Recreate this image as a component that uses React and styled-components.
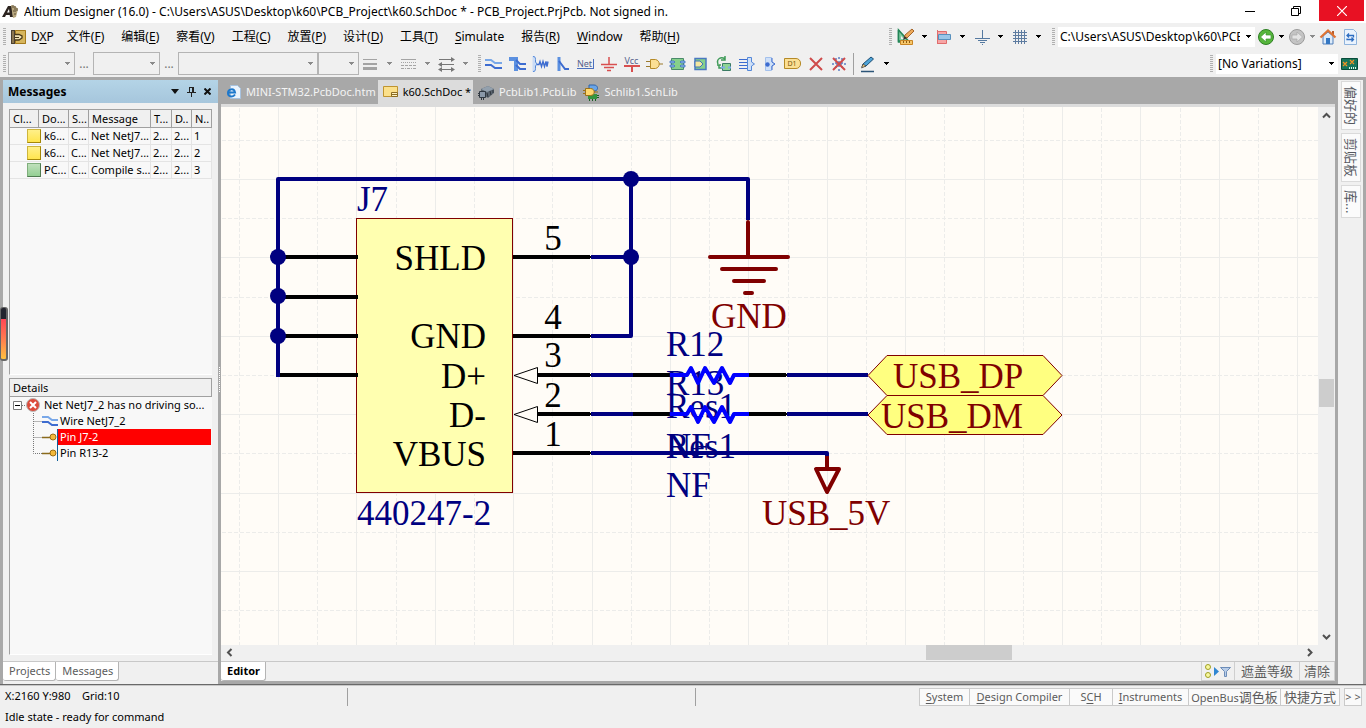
import React from "react";
import styled, { createGlobalStyle, css } from "styled-components";

const UI = `"Noto Sans", "Noto Sans CJK SC", sans-serif`;

const GlobalStyle = createGlobalStyle`
  * { box-sizing: border-box; }
  body { margin: 0; background: #f0f0f0; color: #000; font: 12px/16px ${UI}; }
  button, select, input { font: inherit; color: inherit; }
  button { padding: 0; border: 0; background: none; cursor: default; }
`;

const Shell = styled.div`
  display: flex;
  flex-direction: column;
  min-height: 100vh;
  overflow: hidden;
  position: relative;
`;

/* ---------- title bar ---------- */

const TitleBar = styled.header`
  display: flex;
  align-items: center;
  gap: 1px;
  height: 23px;
  padding: 0 2px;
  background: #fff;
`;

const AppTitle = styled.h1`
  flex: 1;
  min-width: 0;
  margin: 0 0 0 5px;
  overflow: hidden;
  font-size: 12px;
  font-weight: 400;
  line-height: 23px;
  white-space: nowrap;
`;

const WindowButton = styled.button`
  display: flex;
  align-items: center;
  justify-content: center;
  align-self: flex-start;
  width: 45px;
  height: 21px;
  color: ${(p) => (p.$close ? "#fff" : "#000")};
  background: ${(p) => (p.$close ? "#e81123" : "transparent")};
`;

/* ---------- menu and tool bars ---------- */

const BarRow = styled.div`
  display: flex;
  align-items: center;
  justify-content: space-between;
  height: 27px;
  padding: 0 5px 0 3px;
`;

const BarGroup = styled.div`
  display: flex;
  align-items: center;
  height: 27px;
`;

const Menu = styled.nav`
  display: flex;
  align-items: center;
  gap: 17px;
  margin-left: 5px;
`;

const MenuItem = styled.button`
  line-height: 20px;
  white-space: nowrap;
  &:first-child { margin-right: -4px; }
  u { text-underline-offset: 2px; }
`;

const Grip = styled.span`
  flex: none;
  width: 3px;
  height: 17px;
  margin-left: ${(p) => p.$before || 0}px;
  margin-right: ${(p) => p.$after || 2}px;
  background: repeating-linear-gradient(#b0b0b0 0 1px, transparent 1px 2px);
`;

const ToolButton = styled.button`
  display: flex;
  align-items: center;
  justify-content: center;
  flex: none;
  width: ${(p) => p.$w || 23}px;
  height: 22px;
`;

const Divider = styled.span`
  width: 1px;
  height: 22px;
  margin: 0 4px 0 3px;
  background: #a0a0a0;
`;

const ComboFrame = styled.span`
  display: flex;
  align-items: center;
  gap: 4px;
  flex: none;
  width: ${(p) => p.$w}px;
  height: ${(p) => (p.$filled ? 20 : 23)}px;
  padding-right: 4px;
  background: ${(p) => (p.$filled ? "#fff" : "transparent")};
  border: ${(p) => (p.$filled ? "0" : "1px solid #b4b4b4")};
  select {
    flex: 1;
    min-width: 0;
    height: 100%;
    padding: 0 2px;
    border: 0;
    background: transparent;
    appearance: none;
    text-overflow: clip;
    opacity: 1;
  }
`;

const Ellipsis = styled.span`
  width: 18px;
  color: #777;
  text-align: center;
  line-height: 20px;
`;

/* ---------- workspace ---------- */

const Workspace = styled.main`
  display: flex;
  flex: 1;
  gap: 3px;
  padding: 3px 3px 0;
  background: #a8a8a8;
  border-bottom: 1px solid #696969;
`;

const SidePanel = styled.aside`
  display: flex;
  flex-direction: column;
  flex: none;
  width: 215px;
  background: #f0f0f0;
`;

const PanelHeader = styled.div`
  display: flex;
  align-items: center;
  height: 23px;
  padding: 0 3px 0 5px;
  background: linear-gradient(#b4d4e7, #a6c6dc);
  h2 { flex: 1; margin: 0; font-size: 12px; line-height: 23px; }
`;

const PanelBody = styled.div`
  display: flex;
  flex: 1;
  flex-direction: column;
  gap: 3px;
  padding: 6px;
`;

const ListBox = styled.section`
  flex: ${(p) => p.$grow} 1 0;
  min-height: 120px;
  overflow: hidden;
  background: #f8f8f8;
  border-top: 1px solid #a0a0a0;
  border-left: 1px solid #a0a0a0;
  border-bottom: 1px solid #fff;
`;

const MessageTable = styled.table`
  width: 100%;
  table-layout: fixed;
  border-collapse: separate;
  border-spacing: 0;
  font-size: 11px;
  line-height: 16px;
  th, td {
    height: 17px;
    padding: 0 0 0 2px;
    overflow: hidden;
    font-weight: 400;
    text-align: left;
    white-space: nowrap;
    border-right: 1px solid #e4e4e4;
    border-bottom: 1px solid #e4e4e4;
  }
  th {
    height: 18px;
    padding-left: 3px;
    background: #f0f0f0;
    border-color: #a0a0a0;
  }
`;

const FileCell = styled.div`
  display: flex;
  align-items: center;
  gap: 3px;
  padding-left: 15px;
`;

const Swatch = styled.span`
  width: 14px;
  height: 14px;
  border: 1px solid;
  ${(p) =>
    p.$ok
      ? css`background: linear-gradient(#bfe0bb, #94cf94); border-color: #7fae7c #4f7a50 #4f7a50 #7fae7c;`
      : css`background: linear-gradient(#fff08a, #ffe54e); border-color: #cdb53c #a48708 #a48708 #cdb53c;`}
`;

const DetailsHeader = styled.h3`
  height: 18px;
  margin: 0;
  padding-left: 3px;
  font-size: 11px;
  font-weight: 400;
  line-height: 17px;
  background: #f0f0f0;
  border-right: 1px solid #a0a0a0;
  border-bottom: 1px solid #a0a0a0;
`;

const Tree = styled.ul`
  margin: 0;
  padding: 0;
  list-style: none;
  font-size: 11px;
  line-height: 16px;
  white-space: nowrap;
`;

const TreeItem = styled.li`
  display: flex;
  align-items: center;
  height: 16px;
  padding-left: ${(p) => (p.$root ? 3 : 23)}px;
  padding-right: 1px;
  svg { flex: none; }
  span {
    flex: 1;
    padding-left: ${(p) => (p.$root ? 4 : 2)}px;
    color: ${(p) => (p.$selected ? "#fff" : "#000")};
    background: ${(p) => (p.$selected ? "#f00" : "transparent")};
    border-left: ${(p) => (p.$pin ? "1px solid #10609a" : "0")};
  }
`;

const TabRow = styled.div`
  display: flex;
  height: ${(p) => p.$h || 23}px;
  border-top: 1px solid #c8c8c8;
  background: #f0f0f0;
`;

const BottomTab = styled.button`
  height: 19px;
  padding: 0 5px 0 6px;
  font-size: 11px;
  line-height: 18px;
  color: ${(p) => (p.$active ? "#000" : "#5c5c5c")};
  font-weight: ${(p) => (p.$active ? 700 : 400)};
  background: #fff;
  border-right: 1px solid #b4b4b4;
  border-bottom: 1px solid #b4b4b4;
  border-radius: 0 0 3px 3px;
`;

const DocArea = styled.section`
  display: flex;
  flex: 1;
  flex-direction: column;
  min-width: 0;
  padding-bottom: 3px;
`;

const DocTabs = styled.div`
  display: flex;
  height: 27px;
  border-bottom: 3px solid #dcdcdc;
`;

const DocTab = styled.button`
  display: flex;
  align-items: center;
  gap: 5px;
  height: 24px;
  padding: 0 2px 0 5px;
  font-size: 11px;
  white-space: nowrap;
  color: ${(p) => (p.$active ? "#000" : "#f4f4f4")};
  background: ${(p) => (p.$active ? "#dcdcdc" : "transparent")};
`;

const Viewport = styled.div`
  display: grid;
  flex: 1;
  grid-template-columns: 1fr 17px;
  grid-template-rows: 1fr 16px;
  background: #f0f0f0;
`;

const SheetFrame = styled.div`
  display: flex;
  min-width: 0;
  min-height: 430px;
  overflow: hidden;
  background: #fffcf7;
  contain: size;
`;

const SheetSvg = styled.svg`
  width: 100%;
  height: 100%;
  font-family: "Liberation Serif", serif;
  font-size: 35px;
`;

const ScrollTrack = styled.div`
  display: flex;
  flex-direction: ${(p) => (p.$vertical ? "column" : "row")};
  align-items: ${(p) => (p.$vertical ? "center" : "flex-start")};
`;

const ScrollArrow = styled.button`
  display: flex;
  align-items: center;
  justify-content: center;
  flex: none;
  width: 17px;
  height: ${(p) => p.$h || 17}px;
`;

const Space = styled.span`
  flex: ${(p) => p.$grow} 1 0;
`;

const Thumb = styled.span`
  flex: none;
  width: ${(p) => p.$w}px;
  height: ${(p) => p.$h}px;
  background: #cdcdcd;
`;

const EditorActions = styled.div`
  display: flex;
  margin-left: auto;
`;

const ActionButton = styled.button`
  display: flex;
  align-items: center;
  height: 19px;
  padding: 0 ${(p) => p.$pad || 4}px;
  font-size: 13px;
  line-height: 16px;
  color: #5c5c5c;
  border: 1px solid #cfcfcf;
  border-top: 0;
  & + & { border-left: 0; }
`;

const Rail = styled.nav`
  display: flex;
  flex: none;
  flex-direction: column;
  align-items: center;
  gap: 3px;
  width: 25px;
  padding-top: 1px;
  background: #f0f0f0;
`;

const RailTab = styled.button`
  width: 20px;
  padding: 4px 0;
  color: #55585f;
  font-size: 13px;
  line-height: 18px;
  background: #fbfbfb;
  border: 1px solid #dadada;
  writing-mode: vertical-rl;
  text-orientation: sideways;
`;

/* ---------- status bar ---------- */

const StatusBar = styled.footer`
  display: grid;
  grid-template-columns: 348px 348px 1fr;
  height: 43px;
  padding-top: 2px;
  font-size: 11px;
  border-top: 1px solid #c8c8c8;
`;

const StatusText = styled.div`
  height: 18px;
  padding-left: 5px;
  line-height: 16px;
  white-space: pre;
  border-right: ${(p) => (p.$rule ? "1px solid #a0a0a0" : "0")};
`;

const StatusLine = styled.div`
  grid-column: 1 / -1;
  padding-left: 5px;
  line-height: 20px;
`;

const StatusTabs = styled.div`
  display: flex;
  justify-content: flex-end;
  height: 18px;
  padding-right: 4px;
`;

const StatusTab = styled.button`
  flex: none;
  width: ${(p) => p.$w}px;
  height: 18px;
  margin-left: ${(p) => (p.$apart ? 4 : -1)}px;
  overflow: hidden;
  color: #5c5c5c;
  font-size: 11px;
  line-height: 16px;
  white-space: nowrap;
  background: #fafafa;
  border: 1px solid #cacaca;
  u { text-underline-offset: 2px; }
  b { font-size: 13px; font-weight: 400; }
`;

const Gauge = styled.div`
  position: absolute;
  left: 0;
  top: 307px;
  width: 8px;
  height: 54px;
  border: 1px solid #666;
  border-width: 1px 2px 2px 1px;
  border-radius: 3px;
  background: linear-gradient(#23242e 0 11px, #ff4655 11px, #ff7b50 60%, #ffc140);
`;

const SplitDots = styled.span`
  position: absolute;
  left: 219px;
  top: 367px;
  width: 1px;
  height: 25px;
  background: repeating-linear-gradient(#fff 0 1px, transparent 1px 2px);
`;

/* ---------- icons ---------- */

const Icon = ({ w = 18, h = 18, children, ...rest }) => (
  <svg width={w} height={h} viewBox={`0 0 ${w} ${h}`} fill="none" aria-hidden="true" {...rest}>
    {children}
  </svg>
);

const Down = ({ color = "#000" }) => (
  <Icon w={5} h={3} shapeRendering="crispEdges"><path d="M0 0h5v1H4v1H3v1H2V2H1V1H0z" fill={color} /></Icon>
);

const AppLogo = () => (
  <Icon w={16} h={18}>
    <path d="M0 14 6 3h4l1 11H8l-.3-2H4l-1 2zM5 9.500h2.500L7 6z" fill="#2c241f" />
    <path d="m9 2 4 1 3 3-2 8-3 1z" fill="#b8a77e" />
    <path d="M11 2v3m2-2v4m-2 1h3m-2 3h2m1-6v3" stroke="#5e5039" />
  </Icon>
);
const DxpIcon = () => (
  <Icon w={15} h={16}>
    <path d="M0 1h4v14H0z" fill="#4b4030" /><path d="M1 2h2v12H1z" fill="#8b7650" />
    <path d="M4 1h11v14H4z" fill="#d6b55c" /><path d="M4.500 1.500h10v13h-10z" stroke="#a47a1c" />
    <path d="M4 5.500h4l3 1.500v2L8 11H4" fill="#f1e2b4" stroke="#473717" strokeWidth="1.300" />
    <path d="M4 8.500h4" stroke="#473717" />
  </Icon>
);
const DrawTools = () => (
  <Icon>
    <path d="M1.500 3v12h6z" transform="translate(0 -1)" fill="#7fc9a0" stroke="#238557" strokeWidth="1.500" />
    <path d="M1.500 2v11h10z" fill="#7fc9a0" stroke="#238557" strokeWidth="1.500" />
    <path d="M4 8v3h3z" fill="#f0f0f0" />
    <path d="m7 10 1-3 7-6 2 2-7 7z" fill="#eda959" stroke="#a4652a" /><path d="m6 12 1.500-4 2.500 2z" fill="#333" />
    <path d="M3.500 12.500h12v4h-12z" fill="#f6c76c" stroke="#c98524" /><path d="M6.500 13v2m3-2v2m3-2v2" stroke="#8e5b11" />
  </Icon>
);
const AlignIcon = () => (
  <Icon>
    <path d="M2.500 2v14" stroke="#df6d6d" /><path d="M2.500 3.500h9v4h-9zM2.500 11.500h9v4h-9z" fill="#f7a5a5" stroke="#df6d6d" />
    <path d="M3.500 6.500h12v5h-12z" fill="#9ac6e8" stroke="#5890bd" />
  </Icon>
);
const PowerIcon = () => (
  <Icon><path d="M9.500 2v8M2 10.500h15M5 12.500h9M7 14.500h5M9 16.500h1" stroke="#5579a0" /></Icon>
);
const GridIcon = () => (
  <Icon shapeRendering="crispEdges"><path d="M4.500 2v14M7.500 2v14M10.500 2v14M13.500 2v14M2 4.500h14M2 7.500h14M2 10.500h14M2 13.500h14" stroke="#5d7ba0" /></Icon>
);
const RoundArrow = ({ back }) => (
  <Icon>
    <circle cx="9" cy="9" r="7.500" fill={back ? "#56b63b" : "#c4c4c4"} stroke={back ? "#2e7f24" : "#9b9b9b"} />
    <path d={back ? "M3.500 9 9 4v3h5v4H9v3z" : "M14.500 9 9 4v3H4v4h5v3z"} fill={back ? "#fff" : "#e4e4e4"} stroke={back ? "#3d9630" : "#aaa"} strokeWidth=".7" />
  </Icon>
);
const HomeIcon = () => (
  <Icon>
    <path d="M4 8v8h10V8L9 4z" fill="#dcebfa" stroke="#517fba" /><path d="M7 10h4v6H7z" fill="#3477c3" />
    <path d="M13 3h2v4h-2z" fill="#ba5d2d" /><path d="m1.500 9.500 7.500-7 7.500 7" stroke="#df7434" strokeWidth="2.200" />
  </Icon>
);
const RefreshDoc = () => (
  <Icon w={16}>
    <path d="M2.500 1.500h9l3 3v12h-12z" fill="#eaf3fd" stroke="#8fb3dc" />
    <path d="M5 7.500h6.500v2M7 5.500l-2 2 2 2M11.500 11.500H5v-1m4.500-1 2 2-2 2" stroke="#2d6dc1" strokeWidth="1.300" />
  </Icon>
);
const PcbVariant = () => (
  <Icon w={17} h={14}>
    <path d="M.5 1.500h16v11H.5z" fill="#16765c" stroke="#084c3a" />
    <path d="m2 5 4 4m0-4L2 9m7-6 4 4m0-4L9 7" stroke="#f59322" strokeWidth="1.300" />
    <path d="M8.500 10v2m2-2v2m2-2v2m2-2v2" stroke="#d9f4e6" />
  </Icon>
);
const LinesIcon = ({ dashed }) => (
  <Icon w={16} h={12} shapeRendering="crispEdges">
    {dashed ? (
      <>
        <path d="M1 1.500h15" stroke="#a4a4a4" />
        <path d="M1 4.500h15" stroke="#a4a4a4" strokeDasharray="1 1" />
        <path d="M1 7.500h15" stroke="#a4a4a4" strokeDasharray="3 1" />
        <path d="M1 10.500h15" stroke="#a4a4a4" strokeDasharray="3 1 1 1" />
      </>
    ) : (
      <path d="M1 1h14v1H1zM1 5h14v2H1zM1 9h14v3H1z" fill="#a4a4a4" />
    )}
  </Icon>
);
const SwapArrows = () => (
  <Icon w={17} h={16}>
    <path d="M1 3.500h15M1 8.500h15M1 13.500h15" stroke="#777" />
    <path d="m13 1 4 2.500L13 6zM4 6 0 8.500 4 11zM13 11l4 2.500-4 2.500zM4 11l-4 2.500L4 16z" fill="#777" />
  </Icon>
);

const ICON_BLUE = "#3d6cd0";
const WireIcon = () => (
  <Icon w={17} h={16}>
    <path d="M0 4h6l4 3h7" stroke="#78a7e8" strokeWidth="2" /><path d="M0 9h6l4 3h7" stroke={ICON_BLUE} strokeWidth="2" />
  </Icon>
);
const BusIcon = () => (
  <Icon w={18} h={16}>
    <path d="M1 3h7v12" stroke="#5b90e0" strokeWidth="4" /><path d="M8 4l4 4h6M8 9l4 4h6" stroke={ICON_BLUE} strokeWidth="2" />
  </Icon>
);
const HarnessIcon = () => (
  <Icon w={18} h={16}>
    <path d="M1.500 0v16h1c2 0 2-1 2-3v-3l1.500-2-1.500-2V3c0-2 0-3-2-3z" fill="#cadcf6" /><path d="M2 .5c2 0 2.500 1 2.500 3V6L6 8l-1.500 2v2.500c0 2-.5 3-2.500 3" stroke="#5488d8" />
    <path d="M6 8.500h2l1-3 1.500 5 1.500-5 1.500 5 1.500-5 1 5 1-5" stroke={ICON_BLUE} strokeWidth="1.400" />
  </Icon>
);
const EntryIcon = () => (
  <Icon w={14} h={16}><path d="M3 1v14" stroke="#5b90e0" strokeWidth="3" /><path d="m3 5 6 8h4" stroke={ICON_BLUE} strokeWidth="2" /></Icon>
);
const ToolLabel = styled.span`
  padding-right: 1px;
  color: #55618c;
  font-size: 9px;
  line-height: 9px;
  border: solid #4a6fc0;
  border-width: 0 1px 1px 0;
`;
const VccStack = styled.span`
  display: flex;
  flex-direction: column;
  align-items: center;
  color: #55618c;
  font-size: 9px;
  line-height: 9px;
`;
const GroundIcon = () => (
  <Icon w={16} h={16}><path d="M8 1v7M0 8.500h16M3 11.500h10M6 14.500h4" stroke="#d84f4f" strokeWidth="1.500" /></Icon>
);
const GateIcon = () => (
  <Icon w={17} h={12}>
    <path d="M0 3.500h5M0 8.500h5M13 6h4" stroke="#9c7a2d" />
    <path d="M4.500 1.500h5c5 1 5 8 0 9h-5z" fill="#fbdf94" stroke="#b58a27" />
  </Icon>
);
const SheetSymbol = () => (
  <Icon w={17} h={14}>
    <path d="M2.500 1.500h12v11h-12z" fill="#86d08a" stroke="#4a8a6a" />
    <path d="M1 4h4l1 1-1 1H1zM1 8h4l1 1-1 1H1zM16 4h-4l-1 1 1 1h4zM16 8h-4l-1 1 1 1h4z" fill="#8bb5ee" stroke="#3d71bd" strokeWidth=".8" />
  </Icon>
);
const SheetEntry = () => (
  <Icon w={13} h={14}>
    <path d="M1 1.500h11v11H1z" fill="#86d08a" stroke="#4a78c0" strokeWidth="1.500" /><path d="M1 4h5l3 3-3 3H1z" fill="#f2e7a0" stroke="#3d71bd" />
  </Icon>
);
const DeviceSheet = () => (
  <Icon w={15} h={16}>
    <path d="M2 8C0 3 5 0 9 3M9 0v4H5M1 9h4M3 9v3h3" stroke="#3f9b58" strokeWidth="1.500" />
    <path d="M6.500 7.500h8v7h-8z" fill="#8ed493" stroke="#3b7c64" /><path d="M5 10.500h4v2H5zM12 10.500h3v2h-3z" fill="#7eace8" />
  </Icon>
);
const HarnessConn = () => (
  <Icon w={16} h={16}>
    <path d="M0 3.500h8M0 6.500h8M0 9.500h8M0 12.500h8" stroke={ICON_BLUE} /><path d="M8.500 1.500h4v4.500l3 2-3 2v4.500h-4z" fill="#cfe0f8" stroke="#5488d8" />
  </Icon>
);
const HarnessEntry = () => (
  <Icon w={12} h={16}>
    <path d="M1.500 1.500h6v4.500l3 2-3 2v4.500h-6z" fill="#cfe0f8" stroke="#a4c1ec" /><circle cx="3.500" cy="8.500" r="2.200" fill={ICON_BLUE} /><path d="M8 2v4l3 2-3 2v4" stroke={ICON_BLUE} />
  </Icon>
);
const CrossIcon = ({ noErc }) => (
  <Icon w={14} h={14}>
    {noErc && <path d="M7 0v14M0 7h14M4 1v12M10 1v12" stroke="#5c7fc4" strokeDasharray="2 2" strokeWidth="1.500" />}
    <path d="m1 1 12 12M13 1 1 13" stroke="#cf4b4b" strokeWidth="2" />
  </Icon>
);
const PenIcon = () => (
  <Icon w={16} h={18}>
    <path d="m2 12 1-3 8-7 2.500 2L6 11z" fill="#4ea4d8" stroke="#1d4e74" /><path d="M1.500 13 3 9l3 2z" fill="#e9c27a" stroke="#333" strokeWidth=".6" />
    <path d="M1 16.500h13" stroke="#2c5578" strokeWidth="1.500" />
  </Icon>
);

const PortTag = styled.span`
  padding: 0 3px 0 2px;
  color: #7a5a10;
  font-size: 7px;
  line-height: 9px;
  background: #fbdf94;
  border: 1px solid #b58a27;
  border-radius: 0 5px 5px 0;
`;

const HtmlDoc = () => (
  <Icon w={15} h={16}>
    <path d="M4.500 1.500h7l3 3v10h-10z" fill="#eaf3fd" stroke="#a7c2df" />
    <path d="M9 10.500C7 13.500 2 13 2 9s6-5.500 7-.500H3" stroke="#1d78cc" strokeWidth="2" />
  </Icon>
);
const SchDocIcon = () => (
  <Icon w={15} h={14}>
    <path d="M.5 1.500h14v10H.5z" fill="#fbe08b" stroke="#bf9430" /><path d="M8.500 7.500h6v4h-6zM9 9.500h5" fill="#fff3c4" stroke="#8b6c23" />
  </Icon>
);
const PcbLibIcon = () => (
  <Icon w={16} h={16}>
    <path d="m3 5 7-3 6 3v4l-6 5-7-4z" fill="#5b6570" /><path d="m3 5 7-3 6 3-7 3z" fill="#93a0ad" />
    <path d="m9 9 1 4m2-6 1 4m2-5v3" stroke="#2d343b" /><path d="M1.500 7.500h6v6h-6z" fill="#8a98a8" stroke="#303841" />
    <path d="M0 9.500h1M0 11.500h1M3.500 14v2M5.500 14v2" stroke="#303841" />
  </Icon>
);
const SchLibIcon = () => (
  <Icon w={16} h={17}>
    <path d="M5 10h9v5H5z" fill="#35943f" /><path d="M6.500 15v2m3-2v2m3-2v2M14 11.500h2M14 13.500h2" stroke="#1c5c25" />
    <path d="M6 1h5c4 0 5 5 1 6H6z" fill="#6aa5e8" stroke="#2e64aa" /><path d="M2.500 4.500h5c5 0 5 7 0 7h-5zM0 6.500h2M0 9.500h2M11 8h4" fill="#ffd76d" stroke="#9b701a" />
  </Icon>
);
const PinIcon = () => (
  <Icon w={9} h={11}><path d="M2 1h5M2.500 1v5M5.500 1v5M6.500 1v5M0 6.500h9M4.500 7v4" stroke="#222" shapeRendering="crispEdges" /></Icon>
);
const ErrorBranch = () => (
  <Icon w={27} h={16}>
    <path d="M.5 4.500h8v8h-8z" fill="#fff" stroke="#7a7a7a" /><path d="M2 8.500h5" stroke="#000" /><path d="M9 8.500h5" stroke="#777" strokeDasharray="1 1" />
    <circle cx="20" cy="8" r="6.500" fill="#dc4a3a" stroke="#b8b8b8" /><path d="m17 5 6 6m0-6-6 6" stroke="#fff" strokeWidth="2" />
  </Icon>
);
const Branch = ({ pin, last }) => (
  <Icon w={pin ? 24 : 25} h={16}>
    <path d={last ? "M.5 0v8.500H9" : "M.5 0v16M.5 8.500H9"} stroke="#777" strokeDasharray="1 1" />
    {pin ? (
      <><path d="M9 8.500h9" stroke="#8a6b1c" strokeWidth="1.500" /><circle cx="20" cy="8" r="3" fill="#f3b93b" stroke="#9c6d14" /></>
    ) : (
      <><path d="M9 4h6l4 3h6" stroke="#78a7e8" strokeWidth="2" /><path d="M9 9h6l4 3h6" stroke={ICON_BLUE} strokeWidth="2" /></>
    )}
  </Icon>
);
const FilterIcon = () => (
  <Icon w={26} h={16}>
    <circle cx="3" cy="4" r="2.500" fill="#f8f8a0" stroke="#a0a024" /><circle cx="3" cy="12" r="2.500" fill="#f8f8a0" stroke="#a0a024" />
    <path d="M9 4v9l5-4.500z" fill="#2f86d2" /><path d="M15.500 4.500h10l-4 4v5h-2v-5z" fill="#b9cde8" stroke="#6d8db8" />
  </Icon>
);
const Chevron = ({ d }) => (
  <Icon w={9} h={9}><path d={d} stroke="#505050" strokeWidth="2" /></Icon>
);

/* ---------- schematic sheet ---------- */

const NAVY = "#000080";
const MAROON = "#800000";
const SHEET_X = 221;
const SHEET_Y = 107;
const gridAt = (i) => Math.round(39.2 * i) + 0.5;

const SheetGrid = () => (
  <g stroke="#ececea" shapeRendering="crispEdges">
    {Array.from({ length: 90 }, (_, i) => i - 5).map((i) => (
      <React.Fragment key={i}>
        <path d={`M${278 + gridAt(i)} 0v3000`} strokeDasharray={i % 2 ? "4 2" : undefined} />
        <path d={`M0 ${179 + gridAt(i)}h4000`} strokeDasharray={i % 2 ? "4 2" : undefined} />
      </React.Fragment>
    ))}
  </g>
);

const Resistor = ({ y }) => (
  <path
    d={`M670 ${y}h17l4-7 7 15 7-15 9 15 8-15 8 15 4-8h15`}
    stroke="#0000ff" strokeWidth="4" fill="none" strokeLinejoin="round"
  />
);

const Port = ({ y, h, x, name }) => (
  <>
    <path d={`M868 ${y + h / 2}l19-${h / 2}h156l19 ${h / 2}-19 ${h / 2}H887z`} fill="#ffff80" stroke={MAROON} />
    <text x={x} y={y + 32} fill={MAROON}>{name}</text>
  </>
);

const PIN_NAMES = [["SHLD", 270], ["GND", 348], ["D+", 388], ["D-", 427], ["VBUS", 466]];
const PIN_NUMBERS = [["5", 250], ["4", 329], ["3", 367], ["2", 407], ["1", 446]];
const PART_TEXT = [["R12", 356], ["R13", 395], ["Res1", 418], ["NF", 458], ["Res1", 458], ["NF", 497]];
const JUNCTIONS = [[278, 257], [278, 296], [278, 336], [631, 179], [631, 257]];

const Schematic = () => (
  <SheetSvg role="img" aria-label="J7 USB connector schematic">
    <g transform={`translate(${-SHEET_X} ${-SHEET_Y})`}>
      <SheetGrid />
      <rect x="356.5" y="218.5" width="156" height="274" fill="#ffffb0" stroke={MAROON} />
      <g fill="none" strokeWidth="4" strokeLinecap="butt">
        <path stroke="#000" d="M278 257h80M278 297h80M278 336h80M280 375h78M513 257h77M513 336h77M538 375h52M538 414h52M513 453h77M633 375h39M633 414h39M747 375h39M747 414h39" />
        <path stroke="#000" strokeWidth="2" d="M590 257h2M590 336h2M590 375h2M590 414h2M590 453h2M786 375h2M786 414h2" />
        <path stroke={NAVY} strokeLinejoin="round" d="M278 377V179h470v41M631 179v157h-40M591 257h40M591 375h42M591 414h42M787 375h81M787 414h81M591 453h236v3" />
        <path stroke={MAROON} strokeLinecap="round" d="M748 222v35M710 257h78M722 269h54M734 281h30M745 293h7" />
        <path stroke={MAROON} strokeLinejoin="round" d="M827 456v12M816 469h23l-12 23z" />
      </g>
      <path d="M514 375.500l23.500-8v16zM514 414.500l23.500-8v16z" fill="#fffcf7" stroke="#000" />
      {JUNCTIONS.map(([x, y]) => <circle key={`${x}-${y}`} cx={x} cy={y} r="8" fill={NAVY} />)}
      {PIN_NAMES.map(([t, y]) => <text key={t} x="486" y={y} textAnchor="end">{t}</text>)}
      {PIN_NUMBERS.map(([t, y]) => <text key={t} x="553" y={y} textAnchor="middle">{t}</text>)}
      <g fill={NAVY}>
        <text x="357" y="211">J7</text>
        <text x="357" y="525">440247-2</text>
        {PART_TEXT.map(([t, y], i) => <text key={i} x="666" y={y}>{t}</text>)}
      </g>
      <g fill={MAROON}>
        <text x="711" y="328">GND</text>
        <text x="762" y="525">USB_5V</text>
      </g>
      <Resistor y={375} />
      <Resistor y={414} />
      <Port y={355.5} h={40} x={893} name="USB_DP" />
      <Port y={395.5} h={39} x={881} name="USB_DM" />
    </g>
  </SheetSvg>
);

/* ---------- data ---------- */

const MENUS = [["", "D", "X", "P"], ["文件", "(", "F", ")"], ["编辑", "(", "E", ")"], ["察看", "(", "V", ")"], ["工程", "(", "C", ")"], ["放置", "(", "P", ")"], ["设计", "(", "D", ")"], ["工具", "(", "T", ")"], ["", "", "S", "imulate"], ["报告", "(", "R", ")"], ["", "", "W", "indow"], ["帮助", "(", "H", ")"]];

const DRAW_TOOLS = [
  ["Place wire", <WireIcon />],
  ["Place bus", <BusIcon />],
  ["Place signal harness", <HarnessIcon />],
  ["Place bus entry", <EntryIcon />],
  ["Place net label", <ToolLabel>Net</ToolLabel>],
  ["Place ground", <GroundIcon />],
  ["Place Vcc", <VccStack>Vcc<Icon w={16} h={7}><path d="M0 1h16M8 1v6" stroke="#d84f4f" strokeWidth="2" /></Icon></VccStack>],
  ["Place part", <GateIcon />],
  ["Place sheet symbol", <SheetSymbol />],
  ["Place sheet entry", <SheetEntry />],
  ["Place device sheet", <DeviceSheet />],
  ["Place harness connector", <HarnessConn />],
  ["Place harness entry", <HarnessEntry />],
  ["Place port", <PortTag>D1</PortTag>],
  ["Place no ERC", <CrossIcon />],
  ["Place specific no ERC", <CrossIcon noErc />],
];

const MESSAGES = [
  ["k6...", "C...", "Net NetJ7...", "2...", "2...", "1"],
  ["k6...", "C...", "Net NetJ7...", "2...", "2...", "2"],
  ["PC...", "C...", "Compile s...", "2...", "2...", "3"],
];

const Combo = ({ label, value, disabled, ...frame }) => (
  <ComboFrame {...frame}>
    <select aria-label={label} disabled={disabled} defaultValue={value}>
      <option>{value}</option>
    </select>
    <Down color={disabled ? "#8a8a8a" : "#000"} />
  </ComboFrame>
);

const DropTool = ({ label, icon, w = 23, arrow = 15, color }) => (
  <>
    <ToolButton $w={w} aria-label={label}>{icon}</ToolButton>
    <ToolButton $w={arrow} aria-label={`${label} options`}><Down color={color} /></ToolButton>
  </>
);

export default function App() {
  return (
    <Shell>
      <GlobalStyle />
      <TitleBar>
        <AppLogo />
        <AppTitle>Altium Designer (16.0) - C:\Users\ASUS\Desktop\k60\PCB_Project\k60.SchDoc * - PCB_Project.PrjPcb. Not signed in.</AppTitle>
        <WindowButton aria-label="Minimize"><Icon w={10} h={10}><path d="M0 5.500h10" stroke="currentColor" /></Icon></WindowButton>
        <WindowButton aria-label="Restore"><Icon w={10} h={10}><path d="M.5 2.500h7v7h-7zM2.500 2V.5h7v7H8" stroke="currentColor" /></Icon></WindowButton>
        <WindowButton $close aria-label="Close"><Icon w={10} h={10}><path d="m0 0 10 10M10 0 0 10" stroke="currentColor" strokeWidth="1.200" /></Icon></WindowButton>
      </TitleBar>

      <BarRow>
        <BarGroup>
          <Grip $after={5} />
          <DxpIcon />
          <Menu>
            {MENUS.map(([name, before, key, after]) => (
              <MenuItem key={name + key}>{name}{before}<u>{key}</u>{after}</MenuItem>
            ))}
          </Menu>
        </BarGroup>
        <BarGroup>
          <Grip />
          <DropTool label="Drawing tools" icon={<DrawTools />} />
          <DropTool label="Align" icon={<AlignIcon />} />
          <DropTool label="Power ports" icon={<PowerIcon />} />
          <DropTool label="Grids" icon={<GridIcon />} />
          <Grip $before={6} $after={3} />
          <Combo $filled $w={197} label="Document path" value="C:\Users\ASUS\Desktop\k60\PCB_Project\k60.SchDoc" />
          <DropTool label="Back" icon={<RoundArrow back />} w={22} arrow={9} />
          <DropTool label="Forward" icon={<RoundArrow />} w={22} arrow={9} color="#8a8a8a" />
          <ToolButton $w={22} aria-label="Home"><HomeIcon /></ToolButton>
          <ToolButton $w={22} aria-label="Refresh"><RefreshDoc /></ToolButton>
        </BarGroup>
      </BarRow>

      <BarRow>
        <BarGroup>
          <Grip />
          <Combo disabled $w={67} label="Fill colour" value="" />
          <Ellipsis>...</Ellipsis>
          <Combo disabled $w={67} label="Line colour" value="" />
          <Ellipsis>...</Ellipsis>
          <Combo disabled $w={140} label="Font" value="" />
          <Combo disabled $w={41} label="Font size" value="" />
          <DropTool label="Line width" icon={<LinesIcon />} w={22} arrow={16} color="#8a8a8a" />
          <DropTool label="Line style" icon={<LinesIcon dashed />} w={22} arrow={16} color="#8a8a8a" />
          <DropTool label="Arrow style" icon={<SwapArrows />} w={22} arrow={16} color="#8a8a8a" />
          <Grip $before={5} $after={1} />
          {DRAW_TOOLS.map(([label, icon]) => <ToolButton key={label} aria-label={label}>{icon}</ToolButton>)}
          <Divider />
          <DropTool label="Highlight pen" icon={<PenIcon />} w={20} arrow={16} />
        </BarGroup>
        <BarGroup>
          <Grip $after={3} />
          <Combo $filled $w={122} label="Variant" value="[No Variations]" />
          <ToolButton aria-label="Variants"><PcbVariant /></ToolButton>
        </BarGroup>
      </BarRow>

      <Workspace>
        <SidePanel>
          <PanelHeader>
            <h2>Messages</h2>
            <ToolButton $w={16} aria-label="Panel menu"><Icon w={8} h={5}><path d="M0 0h8L4 5z" fill="#111" /></Icon></ToolButton>
            <ToolButton $w={16} aria-label="Auto hide"><PinIcon /></ToolButton>
            <ToolButton $w={16} aria-label="Close panel"><Icon w={7} h={7}><path d="m.5.5 6 6m0-6-6 6" stroke="#111" strokeWidth="2" /></Icon></ToolButton>
          </PanelHeader>
          <PanelBody>
            <ListBox $grow={24}>
              <MessageTable>
                <colgroup>
                  {[29, 30, 20, 62, 21, 20, 20].map((w, i) => <col key={i} width={w} />)}
                </colgroup>
                <thead>
                  <tr>{["Cl...", "Do...", "S...", "Message", "T...", "D..", "N.."].map((t) => <th key={t} scope="col">{t}</th>)}</tr>
                </thead>
                <tbody>
                  {MESSAGES.map(([file, ...cells], i) => (
                    <tr key={i}>
                      <td colSpan={2}><FileCell><Swatch $ok={i === 2} />{file}</FileCell></td>
                      {cells.map((c, j) => <td key={j}>{c}</td>)}
                    </tr>
                  ))}
                </tbody>
              </MessageTable>
            </ListBox>
            <ListBox $grow={25}>
              <DetailsHeader>Details</DetailsHeader>
              <Tree>
                <TreeItem $root><ErrorBranch /><span>Net NetJ7_2 has no driving so...</span></TreeItem>
                <TreeItem><Branch /><span>Wire NetJ7_2</span></TreeItem>
                <TreeItem $pin $selected><Branch pin /><span>Pin J7-2</span></TreeItem>
                <TreeItem $pin><Branch pin last /><span>Pin R13-2</span></TreeItem>
              </Tree>
            </ListBox>
          </PanelBody>
          <TabRow>
            <BottomTab>Projects</BottomTab>
            <BottomTab>Messages</BottomTab>
          </TabRow>
        </SidePanel>

        <DocArea>
          <DocTabs>
            <DocTab><HtmlDoc />MINI-STM32.PcbDoc.htm</DocTab>
            <DocTab $active><SchDocIcon />k60.SchDoc *</DocTab>
            <DocTab><PcbLibIcon />PcbLib1.PcbLib</DocTab>
            <DocTab><SchLibIcon />Schlib1.SchLib</DocTab>
          </DocTabs>
          <Viewport>
            <SheetFrame><Schematic /></SheetFrame>
            <ScrollTrack $vertical>
              <ScrollArrow aria-label="Scroll up"><Chevron d="M1 6.500 4.500 3 8 6.500" /></ScrollArrow>
              <Space $grow={53} /><Thumb $w={15} $h={28} /><Space $grow={46} />
              <ScrollArrow aria-label="Scroll down"><Chevron d="M1 3l3.500 3.500L8 3" /></ScrollArrow>
            </ScrollTrack>
            <ScrollTrack>
              <ScrollArrow $h={15} aria-label="Scroll left"><Chevron d="M6.500 1 3 4.500 6.500 8" /></ScrollArrow>
              <Space $grow={88} /><Thumb $w={86} $h={15} /><Space $grow={37} />
              <ScrollArrow $h={15} aria-label="Scroll right"><Chevron d="M3 1l3.500 3.500L3 8" /></ScrollArrow>
            </ScrollTrack>
          </Viewport>
          <TabRow $h={20}>
            <BottomTab $active>Editor</BottomTab>
            <EditorActions>
              <ActionButton $pad={3} aria-label="Filter"><FilterIcon /></ActionButton>
              <ActionButton $pad={6}>遮盖等级</ActionButton>
              <ActionButton>清除</ActionButton>
            </EditorActions>
          </TabRow>
        </DocArea>

        <Rail>
          <RailTab>偏好的</RailTab>
          <RailTab>剪贴板</RailTab>
          <RailTab>库...</RailTab>
        </Rail>
      </Workspace>

      <StatusBar>
        <StatusText $rule>{"X:2160 Y:980    Grid:10"}</StatusText>
        <StatusText $rule />
        <StatusTabs>
          <StatusTab $w={51}><u>S</u>ystem</StatusTab>
          <StatusTab $w={101}><u>D</u>esign Compiler</StatusTab>
          <StatusTab $w={44}>S<u>C</u>H</StatusTab>
          <StatusTab $w={77}><u>I</u>nstruments</StatusTab>
          <StatusTab $w={93}>OpenBus<b>调色板</b></StatusTab>
          <StatusTab $w={60}><b>快捷方式</b></StatusTab>
          <StatusTab $w={18} $apart>&gt; &gt;</StatusTab>
        </StatusTabs>
        <StatusLine>Idle state - ready for command</StatusLine>
      </StatusBar>

      <Gauge />
      <SplitDots />
    </Shell>
  );
}
